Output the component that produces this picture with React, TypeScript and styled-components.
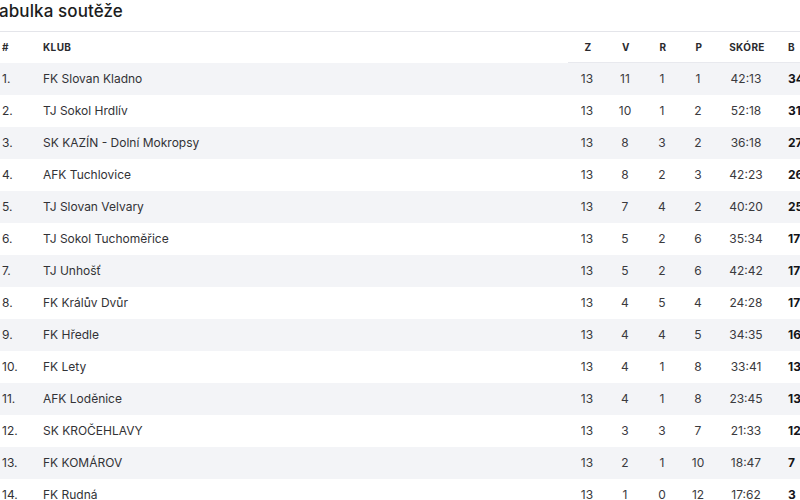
import styled, { createGlobalStyle } from "styled-components";

interface Team {
  name: string;
  z: number;
  v: number;
  r: number;
  p: number;
  score: string;
  b: number;
}

const teams: Team[] = [
  { name: "FK Slovan Kladno", z: 13, v: 11, r: 1, p: 1, score: "42:13", b: 34 },
  { name: "TJ Sokol Hrdlív", z: 13, v: 10, r: 1, p: 2, score: "52:18", b: 31 },
  { name: "SK KAZÍN - Dolní Mokropsy", z: 13, v: 8, r: 3, p: 2, score: "36:18", b: 27 },
  { name: "AFK Tuchlovice", z: 13, v: 8, r: 2, p: 3, score: "42:23", b: 26 },
  { name: "TJ Slovan Velvary", z: 13, v: 7, r: 4, p: 2, score: "40:20", b: 25 },
  { name: "TJ Sokol Tuchoměřice", z: 13, v: 5, r: 2, p: 6, score: "35:34", b: 17 },
  { name: "TJ Unhošť", z: 13, v: 5, r: 2, p: 6, score: "42:42", b: 17 },
  { name: "FK Králův Dvůr", z: 13, v: 4, r: 5, p: 4, score: "24:28", b: 17 },
  { name: "FK Hředle", z: 13, v: 4, r: 4, p: 5, score: "34:35", b: 16 },
  { name: "FK Lety", z: 13, v: 4, r: 1, p: 8, score: "33:41", b: 13 },
  { name: "AFK Loděnice", z: 13, v: 4, r: 1, p: 8, score: "23:45", b: 13 },
  { name: "SK KROČEHLAVY", z: 13, v: 3, r: 3, p: 7, score: "21:33", b: 12 },
  { name: "FK KOMÁROV", z: 13, v: 2, r: 1, p: 10, score: "18:47", b: 7 },
  { name: "FK Rudná", z: 13, v: 1, r: 0, p: 12, score: "17:62", b: 3 },
];

const GlobalStyle = createGlobalStyle`
  body {
    margin: 0;
    overflow: hidden;
    background: #fff;
    font-family: Inter, "Noto Sans", sans-serif;
    color: #2b2b2f;
  }
`;

const App = () => {
  return (
    <>
      <GlobalStyle />
      <StSection>
        <StTitle>Tabulka soutěže</StTitle>
        <StTable>
          <colgroup>
            <col style={{ width: 41 }} />
            <col style={{ width: 527 }} />
            <col style={{ width: 38 }} />
            <col style={{ width: 38 }} />
            <col style={{ width: 36 }} />
            <col style={{ width: 36 }} />
            <col style={{ width: 60 }} />
            <col style={{ width: 60 }} />
          </colgroup>
          <thead>
            <tr>
              <StHead>#</StHead>
              <StHead>KLUB</StHead>
              <StHead $stat>Z</StHead>
              <StHead $stat>V</StHead>
              <StHead $stat>R</StHead>
              <StHead $stat>P</StHead>
              <StHead $stat>SKÓRE</StHead>
              <StHead $points>B</StHead>
            </tr>
          </thead>
          <tbody>
            {teams.map((team, i) => (
              <StRow key={team.name}>
                <StCell>{i + 1}.</StCell>
                <StCell>{team.name}</StCell>
                <StStat>{team.z}</StStat>
                <StStat>{team.v}</StStat>
                <StStat>{team.r}</StStat>
                <StStat>{team.p}</StStat>
                <StStat>{team.score}</StStat>
                <StPoints>{team.b}</StPoints>
              </StRow>
            ))}
          </tbody>
        </StTable>
      </StSection>
    </>
  );
};

const StSection = styled.section`
  width: 836px;
`;

const StTitle = styled.h2`
  margin: 0 0 0 -11px;
  height: 31px;
  font-size: 17px;
  line-height: 22px;
  font-weight: 500;
  color: #1c1c20;
  letter-spacing: 0.1px;
`;

const StTable = styled.table`
  width: 836px;
  table-layout: fixed;
  border-collapse: collapse;
  border-top: 1px solid #e4e5ea;
`;

const StHead = styled.th<{ $stat?: boolean; $points?: boolean }>`
  height: 30px;
  padding: 0 0 0 ${({ $points }) => ($points ? "12px" : "2px")};
  text-align: ${({ $stat }) => ($stat ? "center" : "left")};
  font-size: 10px;
  font-weight: 700;
  letter-spacing: 0.4px;
  color: #2a2a2e;
  border-bottom: 1px solid ${({ $stat, $points }) => ($stat || $points ? "#e8e9ee" : "transparent")};
`;

const StRow = styled.tr`
  height: 32px;

  &:nth-child(odd) {
    background: #f3f4f7;
  }
`;

const StCell = styled.td`
  padding: 0 0 0 2px;
  font-size: 12px;
  color: #323236;
  white-space: nowrap;
`;

const StStat = styled.td`
  padding: 0;
  text-align: center;
  font-size: 12px;
  color: #3a3a3e;
`;

const StPoints = styled.td`
  padding: 0 0 0 12px;
  font-size: 12px;
  font-weight: 700;
  color: #141418;
`;

export default App;
